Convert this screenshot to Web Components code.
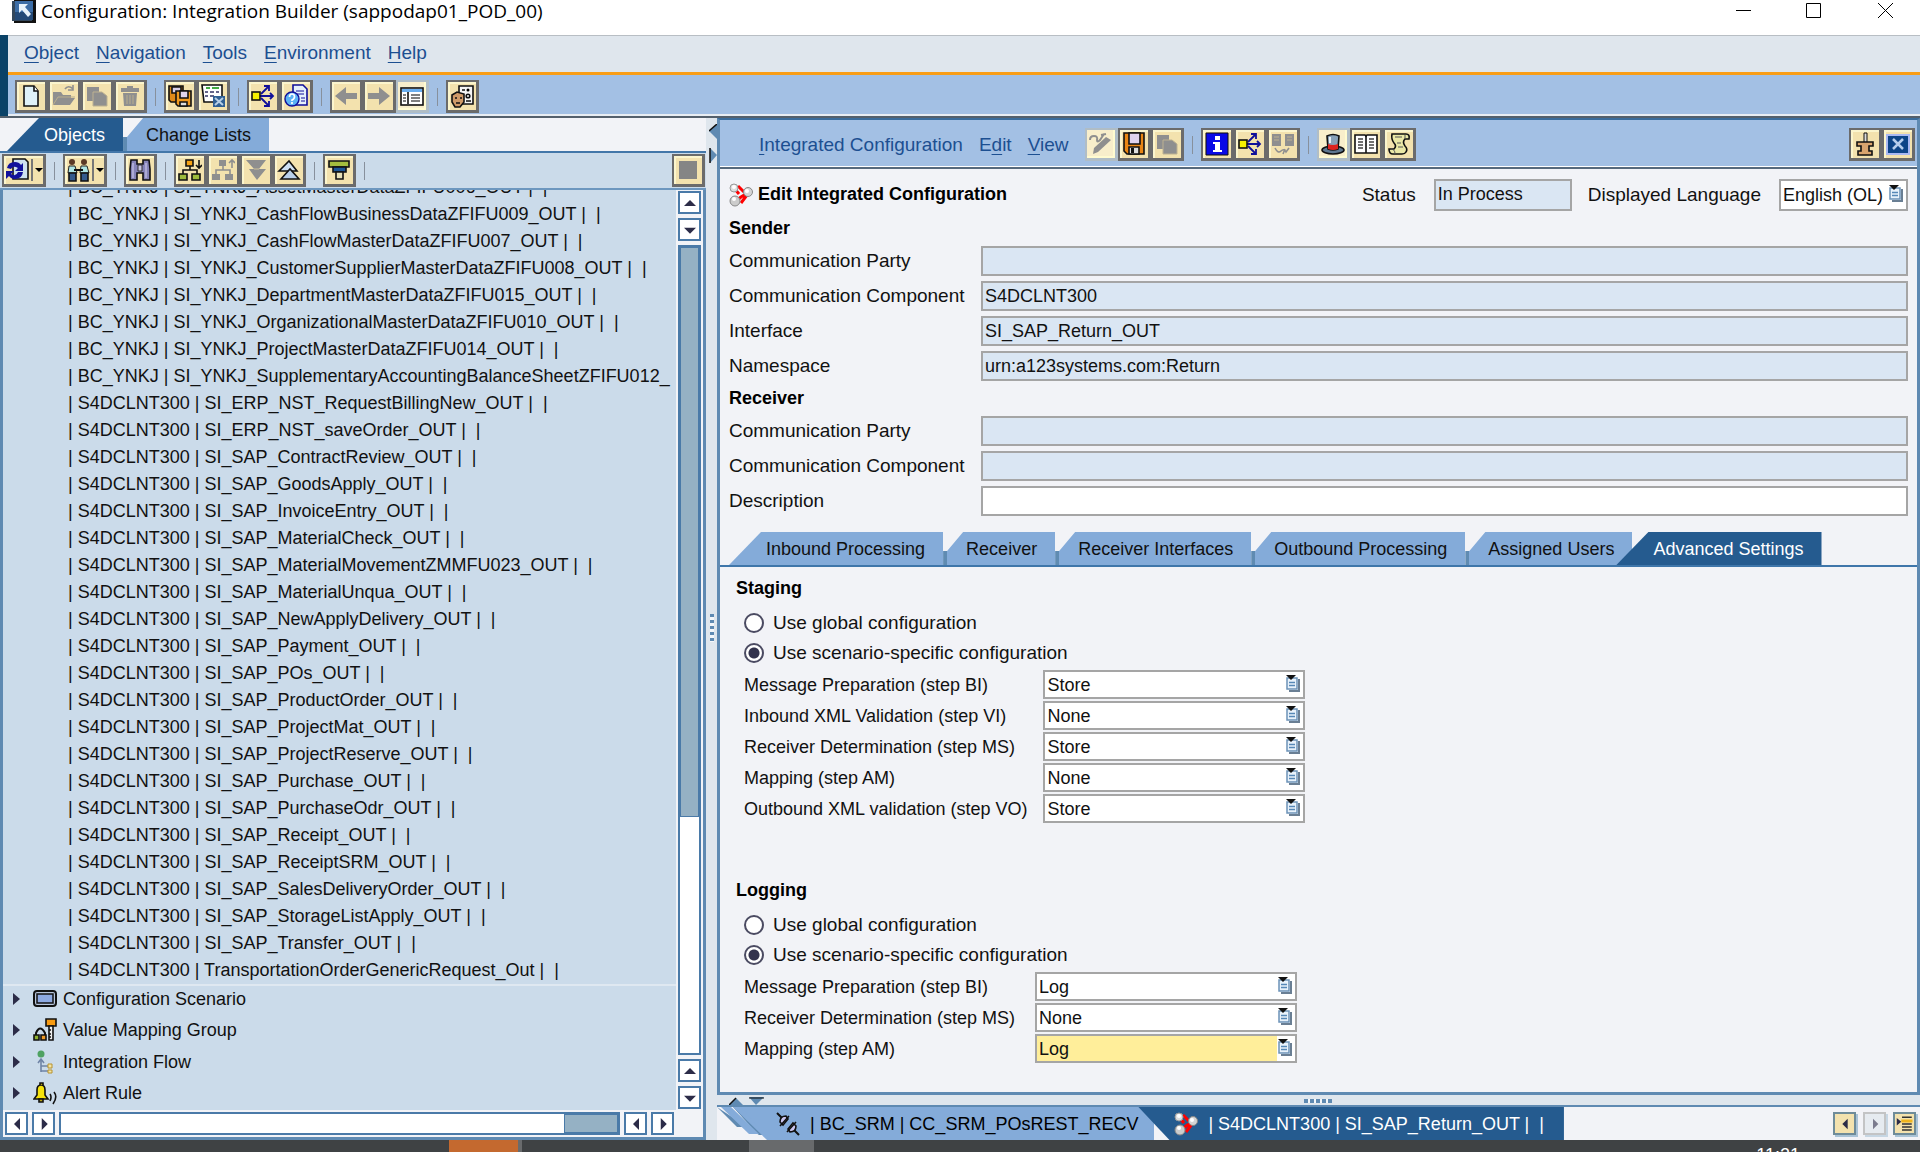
<!DOCTYPE html>
<html lang="en">
<head>
<meta charset="utf-8">
<title>Configuration: Integration Builder (sappodap01_POD_00)</title>
<style>
    :root {
        --bar: #a3c0e4;
        --pale: #dfe6ed;
        --tree: #cbdbea;
        --form: #f2f3f7;
        --edge: #5f8ab2;
        --tab: #84abd9;
        --tab-active: #255b8f;
        --text-lg: 19px;
    }

    body {
        margin: 0;
        font: 18px/24px "Liberation Sans", Arial, sans-serif;
        color: #111;
    }
</style>
</head>
<body>
<integration-builder></integration-builder>

<script>
    const K = 'stroke="#111" stroke-width="1.6"';
    const G = '#8f8f8f';

    const icons = {
        app: `<rect x="2" y="0" width="22" height="23" fill="#111"/><rect x="0" y="1" width="20" height="20" fill="#33475c"/><rect x="3" y="1" width="18" height="19" fill="#3c6da6"/><path d="M3 12h18v8H3z" fill="#244a78"/><path d="M7 4h9l-3 3 6 7-3 3-6-7-3 3z" fill="#e8f3fc"/>`,
        page: `<path d="M5 2h10l4 5v15H5z" fill="#dff1f8" ${K}/><path d="M15 2v5h4" fill="#fff" ${K}/>`,
        open: `<path d="M1 21V8h8l2 3h8v3h4l-5 7z" fill="${G}"/><path d="M1 21l5-8h17" fill="none" stroke="#b9ae8d"/><path d="M13 5c2-3 5-3 8 0m0-4v5h-5" fill="none" stroke="${G}" stroke-width="1.6"/>`,
        copy: `<path d="M2 3h12v14H2z" fill="${G}"/><path d="M8 8h9l5 4v10H8z" fill="${G}" stroke="#bdb191"/>`,
        trash: `<path d="M3 4h6V2h6v2h6v4H3zM5 9h14l-1 13H6z" fill="${G}"/><path d="M9 11v9M12 11v9M15 11v9" stroke="#b9ae8d"/>`,
        saveAll: `<path d="M1 2h14v16H3l-2-2z" fill="#e08a1a" ${K}/><path d="M4 3h9v6H4z" fill="#d9d0e8" ${K}/><path d="M8 7h15v15H10l-2-2z" fill="#f09a20" ${K}/><path d="M12 7h8v7h-8z" fill="#e0d4ee" ${K}/><path d="M12 18h7v4h-7z" fill="#ddd" ${K}/>`,
        worklist: `<path d="M1 1h20v17H3z" fill="#fff" ${K}/><path d="M5 4h4M11 4h7" stroke="#4a4" stroke-width="2"/><path d="M4 8h3M9 8h4M15 8h3M4 12h3M9 12h4" stroke="#336" stroke-width="1.6"/><rect x="12" y="12" width="12" height="11" fill="#2f5f94"/><path d="M14 14l8 7M22 14l-8 7" stroke="#b7cfe6" stroke-width="2"/>`,
        where: `<path d="M9 12h13M10 10l7-7M10 14l7 7M19 9l3 3-3 3M13 2h5v5M13 22h5v-5" fill="none" stroke="#10109a" stroke-width="1.8"/><rect x="1" y="8" width="8" height="8" fill="#f6f000" ${K}/>`,
        helpPage: `<path d="M9 1h10l4 4v16H9z" fill="#e5f0fb" stroke="#10109a" stroke-width="1.6"/><path d="M12 7h8M12 10h8M17 14h4M17 17h4" stroke="#10109a"/><circle cx="8" cy="15" r="7" fill="#5bb2f5" stroke="#10109a" stroke-width="1.4"/><path d="M5.5 13q0-3 2.5-3t2.5 2.5T8 16v1m0 1v2" fill="none" stroke="#fff" stroke-width="1.7"/>`,
        back: `<path d="M1 12L12 3v6h11v6H12v6z" fill="${G}"/>`,
        forward: `<path d="M23 12L12 3v6H1v6h11v6z" fill="${G}"/>`,
        layout: `<rect x="1" y="4" width="22" height="17" fill="#fff" ${K}/><path d="M2 5h20v3H2z" fill="#69aef0"/><path d="M8 8v12" stroke="#111" stroke-width="1.6"/><path d="M3 11h3M3 14h3M3 17h3M11 11h9M11 14h9M11 17h9" stroke="#555" stroke-width="1.3"/>`,
        face: `<path d="M9 2h14v18H9z" fill="#f5f5f5" ${K}/><circle cx="18" cy="6" r="1.5"/><path d="M12 6h3M16 17h5" stroke="#111" stroke-width="1.5"/><circle cx="18" cy="12" r="1.8" fill="none" ${K}/><path d="M2 11l5-3 7 2v8l-4 5H5l-3-5z" fill="#d09a68" ${K}/><path d="M5 14h2M10 14h2M6 19h4" stroke="#111" stroke-width="1.5"/>`,
        refresh: `<path d="M8 1h12l3 3v17H8z" fill="#cfe2f1" ${K}/><path d="M2 10q1-6 8-6 4 0 6 3l2-2v8h-8l3-3q-5-3-7 1zM18 14q-1 7-8 7-4 0-6-3l-3 3v-8h8l-3 3q5 3 7-2z" fill="#11119c"/>`,
        people: `<circle cx="6" cy="4" r="3" fill="#5b3826"/><circle cx="18" cy="4" r="3" fill="#5b3826"/><path d="M3 8h6l2 7H2zM15 8h6l2 7h-9z" fill="#aee4e4" stroke="#222"/><path d="M8 12h9" stroke="#111" stroke-width="2"/><path d="M3 15h7v8H3zM15 15h7v8h-7z" fill="#345a8d" ${K}/>`,
        find: `<path d="M3 2h6v4h6V2h6l1 9v11h-7v-7H9v7H2V11z" fill="#8583b8" ${K}/><path d="M10 7h4v6h-4z" fill="#c8c5e4" stroke="#333"/><path d="M5 5v15M18 5v15" stroke="#bbb9de" stroke-width="1.5"/>`,
        expand: `<path d="M12 8v4M5 16v-4h14v4" fill="none" ${K}/><path d="M8 2h7v6H8z" fill="#f5a214" ${K}/><path d="M1 16h8v6H1zM14 16h8v6h-8z" fill="#9dbc3c" ${K}/><path d="M21 2v8M18 7l3 3 3-3" fill="none" ${K}/>`,
        collapse: `<path d="M12 8v4M5 16v-4h14v4" fill="none" stroke="${G}" stroke-width="1.6"/><path d="M8 2h7v6H8zM1 16h8v6H1zM14 16h8v6h-8z" fill="${G}"/><path d="M21 10V2M18 5l3-3 3 3" fill="none" stroke="${G}" stroke-width="1.6"/>`,
        down: `<path d="M2 2h20l-7 9h7l-9 11-8-11h5z" fill="${G}"/><path d="M10 11h5" stroke="#c9bd98"/>`,
        up: `<path d="M2 13l10-10 8 10z" fill="#cfe0f2" ${K}/><path d="M4 21l9-10 9 10z" fill="#b9d0ea" ${K}/>`,
        filter: `<path d="M2 3h20v6H2z" fill="#a4bd3e" ${K}/><path d="M6 9h13v5H6z" fill="#1c5596" ${K}/><path d="M9 14h7v7H9z" fill="#e6e0b8" ${K}/>`,
        stop: `<path d="M3 3h18v18H3z" fill="#858585"/>`,
        edit: `<path d="M4 22l1-6L17 5l5 3L9 20z" fill="${G}"/><path d="M1 8q0-4 4-4t3 4q0 3 3 0l4-6M12 3l5-1" fill="none" stroke="${G}" stroke-width="2"/>`,
        save: `<path d="M2 1h20v21H5l-3-3z" fill="#e98514" ${K}/><path d="M7 1h11v11H7z" fill="#dfd2ee" ${K}/><path d="M7 15h10v7H7z" fill="#ddd" ${K}/><path d="M9 16h3v5H9z" fill="#111"/>`,
        info: `<path d="M1 1h22v22H1z" fill="#0909e6" stroke="#111"/><path d="M10 4h5v4h-5zM8 10h7v8h2v2H8v-2h2v-6H8z" fill="#fff"/>`,
        compare: `<path d="M1 2h9v12H1zM14 2h9v12h-9z" fill="${G}"/><path d="M3 5h5M3 8h5M16 5h5M16 8h5" stroke="#bdb191"/><path d="M4 16q3 6 6 3t5 1l3-4M12 22l2-5" fill="none" stroke="${G}" stroke-width="1.6"/>`,
        hat: `<ellipse cx="12" cy="18" rx="11" ry="4" fill="#5d7790" ${K}/><path d="M6 4q6-3 12 0l-1 13q-5 2-10 0z" fill="#87a0b8" ${K}/><path d="M7 12q5 2 10 0v5q-5 2-10 0z" fill="#dc2320"/><path d="M9 5v6" stroke="#e6eff6" stroke-width="2"/>`,
        book: `<path d="M1 3h10l1 1 1-1h10v18H1z" fill="#fff" ${K}/><path d="M12 4v17" ${K}/><path d="M4 7h5M4 10h5M4 13h5M4 16h5M15 7h5M15 10h5M15 13h5M15 16h5" stroke="#444" stroke-width="1.5"/>`,
        scroll: `<path d="M5 2h14q4 0 3 5h-4q-3 3 0 7 3 3 1 6-1 2-4 2H6q-4 0-4-5h5q3-3 0-6-3-4-2-9z" fill="#eae8a6" ${K}/><path d="M18 3v4M4 17q4 0 4 5M8 5h7M10 11h4M11 15h5" stroke="#555" fill="none"/>`,
        pin: `<path d="M11 1h3v10h-3z" fill="#ddd" stroke="#111"/><path d="M4 10h16v4h-4v5h3v4H5v-4h3v-5H4z" fill="#d9a46e" ${K}/>`,
        close: `<path d="M1 3h22v19H1z" fill="#0d4487" stroke="#a8b8f2" stroke-width="2"/><path d="M7 7l10 10M17 7L7 17" stroke="#b6cdec" stroke-width="2.5"/>`,
        nodes: `<path d="M5 5l5 6M7 18l5-4 8-5M9 3l6 6M12 20l6-8" stroke="#f00" stroke-width="3"/><circle cx="5" cy="5" r="4" fill="#ddd" stroke="#999"/><circle cx="19" cy="9" r="4.5" fill="#d5d5d5" stroke="#888"/><circle cx="6" cy="18" r="5" fill="#ccc" stroke="#888"/><circle cx="5" cy="4" r="2" fill="#fff"/><circle cx="18" cy="8" r="2" fill="#fff"/><circle cx="5" cy="16" r="2" fill="#fff"/>`,
        channel: `<path d="M1 1l6 6M17 17l6 6" stroke="#111" stroke-width="2"/><path d="M4 10q0-6 6-6l2 3-5 6z" fill="#c9c4ee" ${K}/><path d="M20 14q0 6-6 6l-2-3 5-6z" fill="#c9c4ee" ${K}/><path d="M4 14l9-10M11 20l9-10" ${K}/>`,
        scenario: `<rect x="1" y="4" width="22" height="15" rx="3" fill="#b8c6dc" stroke="#111" stroke-width="2"/><rect x="4" y="7" width="16" height="9" fill="#8eaae2" stroke="#111" stroke-width="1.5"/>`,
        key: `<path d="M3 18v-3q4-9 9 0v3" fill="none" stroke="#111" stroke-width="2"/><path d="M1 17h5v5H1z" fill="#8db02d" ${K}/><path d="M8 17h5v5H8z" fill="#ee9a28" ${K}/><path d="M13 1h10v7H13z" fill="#f79b13" ${K}/><path d="M16 8h4v14h-4z" fill="#eee" ${K}/><path d="M16 12h2M16 16h2M16 19h2" ${K}/>`,
        flow: `<circle cx="8" cy="4" r="3.5" fill="#4fa262"/><path d="M8 22V10M5 13l3-4 3 4M8 16h7M8 21h7" fill="none" stroke="#6f84a6" stroke-width="1.6"/><path d="M15 14h4v4h-4zM15 20h4v3h-4z" fill="#f2e4a6" stroke="#b8932e"/>`,
        bell: `<path d="M1 18l3-4V9q0-5 4-5t4 5v5l3 4z" fill="#f5e20d" ${K}/><path d="M7 4V2h3v2M6 18h4v3H6z" fill="#b5a010" ${K}/><path d="M17 13q2 3 0 7M21 11q4 5-1 12" fill="none" ${K}/>`,
        menuList: `<path d="M1 4l6 5-6 5z" fill="#2c2c48"/><path d="M8 3h13M8 12h13M8 16h13M8 20h13" stroke="#333" stroke-width="2"/><path d="M7 6h15v4H7z" fill="#f0b51d"/>`,
        navLeft: `<path d="M16 4v16L8 12z" fill="#2c2c48"/>`,
        navRight: `<path d="M9 4v16l8-8z" fill="#2c2c48"/>`,
        navUp: `<path d="M4 16h16l-8-8z" fill="#2c2c48"/>`,
        navDown: `<path d="M4 9h16l-8 8z" fill="#2c2c48"/>`
    };

    const svg = (name, size = 24) =>
        `<svg width="${size}" height="${size}" viewBox="0 0 24 24" aria-hidden="true">${icons[name]}</svg>`;

    class BaseElement extends HTMLElement {
        connectedCallback() {
            if (this.shadowRoot) return;
            this.attachShadow({ mode: 'open' });
            this.shadowRoot.innerHTML = this.render();
        }

        attr(name, fallback = '') {
            return this.getAttribute(name) ?? fallback;
        }
    }

    class ToolButton extends BaseElement {
        render() {
            const split = this.hasAttribute('split');
            return `
                <style>
                    :host { display: block; flex: none; }
                    button {
                        box-sizing: border-box;
                        width: 33px;
                        height: 33px;
                        padding: 0;
                        display: flex;
                        align-items: center;
                        justify-content: center;
                        background: #f3e2ae;
                        border: 2px solid #6b6b6b;
                        border-right-width: 3px;
                        border-bottom-width: 3px;
                        box-shadow: inset 2px 2px #fbf5cd;
                    }
                    button.split { width: 44px; gap: 2px; }
                    button.pressed {
                        background: #f8eecb;
                        border-color: #b0bdc6;
                        box-shadow: inset -2px -2px #fffbd0;
                    }
                    .drop { border-left: 2px solid #777; padding: 8px 0 8px 2px; }
                    .drop svg { display: block; }
                </style>
                <button type="button" class="${split ? 'split' : ''} ${this.hasAttribute('pressed') ? 'pressed' : ''}" aria-label="${this.attr('icon')}">
                    ${svg(this.attr('icon'))}
                    ${split ? '<span class="drop"><svg width="8" height="6"><path d="M0 1h8L4 5z"/></svg></span>' : ''}
                </button>
            `;
        }
    }

    class ToolSeparator extends BaseElement {
        render() {
            return `
                <style>
                    :host { display: block; flex: none; width: 1px; height: 18px; margin: 0 8px; background: #87909c; }
                </style>
            `;
        }
    }

    class MenuItem extends BaseElement {
        render() {
            return `
                <style>
                    :host { display: block; font-size: var(--text-lg); }
                    a { color: #1c4f91; text-decoration: none; white-space: nowrap; }
                    ::slotted(u) { text-underline-offset: 3px; }
                </style>
                <a href="#"><slot></slot></a>
            `;
        }
    }

    class TabItem extends BaseElement {
        render() {
            return `
                <style>
                    :host { display: block; flex: none; }
                    :host([active]) { position: relative; z-index: 1; }
                    button {
                        height: 33px;
                        padding: 0 18px 0 23px;
                        border: 0;
                        font: inherit;
                        color: #111;
                        white-space: nowrap;
                        background: linear-gradient(90deg, #5f8bb2 4px, var(--tab) 4px);
                        clip-path: polygon(0 19px, 4px 19px, 20px 0, 100% 0, 100% 100%, 0 100%);
                    }
                    :host([first]) button, :host([active]) button {
                        padding-left: 37px;
                        background: var(--tab);
                        clip-path: polygon(0 100%, 32px 0, 100% 0, 100% 100%);
                    }
                    :host([active]) button { background: var(--tab-active); color: #fff; }
                    :host([active]:not([first])) { margin-left: -16px; }
                </style>
                <button type="button" role="tab" aria-selected="${this.hasAttribute('active')}"><slot></slot></button>
            `;
        }
    }

    class ScrollBar extends BaseElement {
        render() {
            const vertical = this.hasAttribute('vertical');
            const pair = (vertical ? ['navUp', 'navDown'] : ['navLeft', 'navRight'])
                .map(n => `<button type="button" aria-label="${n}">${svg(n, 18)}</button>`).join('');
            return `
                <style>
                    :host {
                        display: flex;
                        flex-direction: ${vertical ? 'column' : 'row'};
                        gap: 4px;
                        padding: ${vertical ? '1px 2px' : '2px'};
                        background: var(--form);
                    }
                    button {
                        box-sizing: border-box;
                        flex: none;
                        width: 23px;
                        height: 23px;
                        padding: 0;
                        display: flex;
                        align-items: center;
                        justify-content: center;
                        border: 2px solid #4a7aa8;
                        background: #fff;
                    }
                    .track {
                        flex: 1;
                        display: flex;
                        flex-direction: inherit;
                        border: 2px solid #4a7aa8;
                        background: #fff;
                    }
                    .before { flex: ${this.attr('before')}; }
                    .thumb { flex: ${this.attr('thumb')}; background: #95b1c4; border: 1px solid #4a7aa8; }
                    .after { flex: ${this.attr('after')}; }
                </style>
                ${pair}
                <div class="track"><div class="before"></div><div class="thumb"></div><div class="after"></div></div>
                ${pair}
            `;
        }
    }

    class FormField extends BaseElement {
        render() {
            return `
                <style>
                    :host { display: contents; }
                    label { font-size: var(--text-lg); align-self: center; white-space: nowrap; }
                    input {
                        box-sizing: border-box;
                        width: 100%;
                        height: var(--input-height, 30px);
                        padding: 0 2px;
                        border: 2px solid #a5a5a5;
                        border-radius: 0;
                        background: #dae6f3;
                        font: inherit;
                        color: #111;
                    }
                    input.editable { background: #fff; }
                </style>
                <label for="field">${this.attr('label')}</label>
                <input id="field" value="${this.attr('value')}" ${this.hasAttribute('editable') ? 'class="editable"' : 'readonly'}>
            `;
        }
    }

    class SelectField extends BaseElement {
        render() {
            return `
                <style>
                    :host { display: contents; }
                    label { align-self: center; white-space: nowrap; font-size: var(--label-size, inherit); }
                    .box {
                        display: flex;
                        align-items: center;
                        box-sizing: border-box;
                        height: var(--select-height, 29px);
                        border: 2px solid #a5a5a5;
                        background: #fff;
                    }
                    select {
                        appearance: none;
                        flex: 1;
                        min-width: 0;
                        align-self: stretch;
                        padding: 0 2px;
                        border: 0;
                        border-radius: 0;
                        background: ${this.hasAttribute('focused') ? '#ffee9a' : '#fff'};
                        font: inherit;
                        color: #111;
                    }
                    svg { flex: none; margin: 0 3px 2px 1px; pointer-events: none; }
                </style>
                <label for="field">${this.attr('label')}</label>
                <div class="box">
                    <select id="field"><option>${this.attr('value')}</option></select>
                    <svg width="14" height="17" viewBox="0 0 14 17" aria-hidden="true">
                        <path d="M3 16h10V4" fill="none" stroke="#6a7f94" stroke-width="2"/>
                        <path d="M1 3h10v11H1z" fill="#e8f2fb" stroke="#6c93b8" stroke-width="1.5"/>
                        <path d="M3 7.500h6M3 10.500h6" stroke="#5688b7" stroke-width="1.5"/>
                        <path d="M0 0h10L5 5z" fill="#111"/>
                    </svg>
                </div>
            `;
        }
    }

    class RadioPair extends BaseElement {
        render() {
            return `
                <style>
                    :host { display: block; margin: 5px 0 2px; }
                    .option { display: flex; align-items: center; height: 30px; gap: 9px; font-size: var(--text-lg); }
                    input {
                        appearance: none;
                        box-sizing: border-box;
                        width: 20px;
                        height: 20px;
                        margin: 0;
                        border: 2px solid #4b4b62;
                        border-radius: 50%;
                        background: #fff;
                    }
                    input:checked { background: radial-gradient(circle, #33334d 5px, #fff 6px); }
                </style>
                <div class="option"><input type="radio" name="mode" id="global"><label for="global">Use global configuration</label></div>
                <div class="option"><input type="radio" name="mode" id="scenario" checked><label for="scenario">Use scenario-specific configuration</label></div>
            `;
        }
    }

    class TreeFolder extends BaseElement {
        render() {
            return `
                <style>
                    :host { display: flex; align-items: center; height: 26px; }
                    .toggle { margin: 0 13px 0 10px; }
                    .icon { margin-right: 6px; }
                    svg { display: block; }
                </style>
                <span class="toggle"><svg width="7" height="12"><path d="M0 0l7 6-7 6z" fill="#2c2c48"/></svg></span>
                <span class="icon">${svg(this.attr('icon'))}</span>
                <slot></slot>
            `;
        }
    }

    class ObjectTree extends BaseElement {
        render() {
            const party = 'BC_YNKJ';
            const system = 'S4DCLNT300';
            const end = ' |  |';
            const rows = [
                [party, 'SI_YNKJ_AssetMasterDataZFIFU006_OUT' + end],
                [party, 'SI_YNKJ_CashFlowBusinessDataZFIFU009_OUT' + end],
                [party, 'SI_YNKJ_CashFlowMasterDataZFIFU007_OUT' + end],
                [party, 'SI_YNKJ_CustomerSupplierMasterDataZFIFU008_OUT' + end],
                [party, 'SI_YNKJ_DepartmentMasterDataZFIFU015_OUT' + end],
                [party, 'SI_YNKJ_OrganizationalMasterDataZFIFU010_OUT' + end],
                [party, 'SI_YNKJ_ProjectMasterDataZFIFU014_OUT' + end],
                [party, 'SI_YNKJ_SupplementaryAccountingBalanceSheetZFIFU012_'],
                [system, 'SI_ERP_NST_RequestBillingNew_OUT' + end],
                [system, 'SI_ERP_NST_saveOrder_OUT' + end],
                [system, 'SI_SAP_ContractReview_OUT' + end],
                [system, 'SI_SAP_GoodsApply_OUT' + end],
                [system, 'SI_SAP_InvoiceEntry_OUT' + end],
                [system, 'SI_SAP_MaterialCheck_OUT' + end],
                [system, 'SI_SAP_MaterialMovementZMMFU023_OUT' + end],
                [system, 'SI_SAP_MaterialUnqua_OUT' + end],
                [system, 'SI_SAP_NewApplyDelivery_OUT' + end],
                [system, 'SI_SAP_Payment_OUT' + end],
                [system, 'SI_SAP_POs_OUT' + end],
                [system, 'SI_SAP_ProductOrder_OUT' + end],
                [system, 'SI_SAP_ProjectMat_OUT' + end],
                [system, 'SI_SAP_ProjectReserve_OUT' + end],
                [system, 'SI_SAP_Purchase_OUT' + end],
                [system, 'SI_SAP_PurchaseOdr_OUT' + end],
                [system, 'SI_SAP_Receipt_OUT' + end],
                [system, 'SI_SAP_ReceiptSRM_OUT' + end],
                [system, 'SI_SAP_SalesDeliveryOrder_OUT' + end],
                [system, 'SI_SAP_StorageListApply_OUT' + end],
                [system, 'SI_SAP_Transfer_OUT' + end],
                [system, 'TransportationOrderGenericRequest_Out' + end]
            ];
            return `
                <style>
                    :host {
                        display: flex;
                        flex-direction: column;
                        min-width: 0;
                        min-height: 0;
                        overflow: hidden;
                        background: var(--tree);
                    }
                    ul {
                        flex: 1;
                        min-height: 0;
                        display: flex;
                        flex-direction: column;
                        justify-content: flex-end;
                        margin: 0;
                        padding: 0 0 0 65px;
                        overflow: hidden;
                        list-style: none;
                    }
                    li { flex: none; line-height: 27px; white-space: pre; }
                    .folders {
                        flex: none;
                        display: flex;
                        flex-direction: column;
                        justify-content: space-between;
                        height: 120px;
                        padding-bottom: 4px;
                        border-top: 2px solid #dfe8f1;
                    }
                </style>
                <ul>${rows.map(([c, i]) => `<li>| ${c} | ${i}</li>`).join('')}</ul>
                <div class="folders">
                    <tree-folder icon="scenario">Configuration Scenario</tree-folder>
                    <tree-folder icon="key">Value Mapping Group</tree-folder>
                    <tree-folder icon="flow">Integration Flow</tree-folder>
                    <tree-folder icon="bell">Alert Rule</tree-folder>
                </div>
            `;
        }
    }

    class ObjectsPane extends BaseElement {
        render() {
            return `
                <style>
                    :host { display: flex; flex-direction: column; min-width: 0; min-height: 0; background: var(--form); }
                    .tabs { display: flex; padding-left: 7px; }
                    .tools {
                        display: flex;
                        align-items: center;
                        height: 35px;
                        padding: 0 1px 0 2px;
                        border-top: 2px solid #4377a9;
                        border-bottom: 2px solid #6d97bf;
                        background: var(--tree);
                    }
                    .fill { flex: 1; }
                    .body {
                        flex: 1;
                        min-height: 0;
                        display: grid;
                        grid-template: minmax(0, 1fr) 27px / minmax(0, 1fr) 27px;
                        border: solid var(--edge);
                        border-width: 0 3px 3px;
                    }
                </style>
                <div class="tabs" role="tablist">
                    <tab-item first active>Objects</tab-item>
                    <tab-item>Change Lists</tab-item>
                </div>
                <div class="tools">
                    <tool-button icon="refresh" split></tool-button>
                    <tool-separator></tool-separator>
                    <tool-button icon="people" split></tool-button>
                    <tool-separator></tool-separator>
                    <tool-button icon="find"></tool-button>
                    <tool-separator></tool-separator>
                    <tool-button icon="expand"></tool-button>
                    <tool-button icon="collapse"></tool-button>
                    <tool-button icon="down"></tool-button>
                    <tool-button icon="up"></tool-button>
                    <tool-separator></tool-separator>
                    <tool-button icon="filter"></tool-button>
                    <tool-separator></tool-separator>
                    <span class="fill"></span>
                    <tool-button icon="stop"></tool-button>
                </div>
                <div class="body">
                    <object-tree></object-tree>
                    <scroll-bar vertical before="0" thumb="571" after="237"></scroll-bar>
                    <scroll-bar before="508" thumb="53" after="0"></scroll-bar>
                </div>
            `;
        }
    }

    class PaneSplitter extends BaseElement {
        render() {
            return `
                <style>
                    :host { display: block; position: relative; background: var(--pale); }
                    .arrows { position: absolute; top: 6px; left: 3px; }
                    .dots {
                        position: absolute;
                        top: 496px;
                        left: 4px;
                        width: 4px;
                        height: 28px;
                        background: repeating-linear-gradient(#5f8ab2 0 3px, #f4f7fa 3px 6px);
                    }
                    :host([horizontal]) { height: 10px; }
                    :host([horizontal]) .arrows { top: 2px; left: 12px; }
                    :host([horizontal]) .dots {
                        top: 4px;
                        left: calc(50% - 15px);
                        width: 28px;
                        height: 4px;
                        background: repeating-linear-gradient(90deg, #5f8ab2 0 4px, #f4f7fa 4px 6px);
                    }
                </style>
                ${this.hasAttribute('horizontal')
                    ? '<svg class="arrows" width="36" height="8"><path d="M0 8l7-7 7 7z" fill="#5f8ab2"/><path d="M0 8l7-7" fill="none" stroke="#111" stroke-width="1.5"/><path d="M20 0h15l-8 8z" fill="#5f8ab2"/><path d="M20 1h15" stroke="#111"/></svg>'
                    : '<svg class="arrows" width="8" height="40"><path d="M8 0L0 7l8 8z" fill="#5f8ab2"/><path d="M8 0L0 7" stroke="#111" stroke-width="1.5"/><path d="M1 24l7 7-7 8z" fill="#5f8ab2"/><path d="M1 24v15" stroke="#111" stroke-width="1.5"/></svg>'}
                <div class="dots"></div>
            `;
        }
    }

    class OpenObjects extends BaseElement {
        render() {
            return `
                <style>
                    :host { display: flex; align-items: center; height: 33px; overflow: hidden; }
                    .stack { flex: none; margin-right: -34px; }
                    .tab {
                        display: flex;
                        align-items: center;
                        height: 33px;
                        padding: 0;
                        border: 0;
                        font: inherit;
                        white-space: pre;
                    }
                    .idle {
                        gap: 10px;
                        padding: 0 16px 0 35px;
                        background: var(--tab);
                        clip-path: polygon(0 0, 100% 0, 100% 100%, 28px 100%);
                    }
                    .current {
                        gap: 10px;
                        margin-left: -16px;
                        padding: 0 20px 0 36px;
                        background: var(--tab-active);
                        color: #fff;
                        clip-path: polygon(0 0, 100% 0, 100% 100%, 31px 100%);
                    }
                    .fill { flex: 1; }
                    .nav {
                        box-sizing: border-box;
                        width: 23px;
                        height: 23px;
                        margin-right: 7px;
                        padding: 0;
                        display: flex;
                        align-items: center;
                        justify-content: center;
                        border: 2px solid #6f8c99;
                        background: #f3e2ae;
                        box-shadow: 2px 2px #a9c3d6;
                    }
                    .nav:last-child { margin-right: 4px; }
                    .nav:disabled { background: var(--pale); border-color: #a5a5a5; opacity: 0.6; }
                </style>
                <svg class="stack" width="58" height="33"><path d="M0 0h30l22 28H42zM0 0l20 20h14L16 0z" fill="#5f8ab2"/><path d="M4 0l28 27h10L14 0z" fill="#84abd9"/><path d="M16 0h9l33 33h-8z" fill="#84abd9"/></svg>
                <button type="button" class="tab idle">${svg('channel')}<span>| BC_SRM | CC_SRM_POsREST_RECV</span></button>
                <button type="button" class="tab current">${svg('nodes')}<span>| S4DCLNT300 | SI_SAP_Return_OUT |  |</span></button>
                <span class="fill"></span>
                <button type="button" class="nav" aria-label="Previous">${svg('navLeft', 16)}</button>
                <button type="button" class="nav" aria-label="Next" disabled>${svg('navRight', 16)}</button>
                <button type="button" class="nav" aria-label="List">${svg('menuList', 18)}</button>
            `;
        }
    }

    class EditorPane extends BaseElement {
        render() {
            return `
                <style>
                    :host {
                        display: flex;
                        flex-direction: column;
                        min-width: 0;
                        min-height: 0;
                        background: var(--form);
                    }
                    .frame {
                        flex: 1;
                        min-height: 0;
                        display: flex;
                        flex-direction: column;
                        border: 3px solid var(--edge);
                        border-top: 2px solid #3a6c9c;
                    }
                    header {
                        flex: none;
                        display: flex;
                        align-items: center;
                        height: 43px;
                        gap: 16px;
                        padding: 3px 2px 0 39px;
                        background: var(--bar);
                        border-bottom: 1px solid #fff;
                        box-shadow: 0 2px #56697c;
                    }
                    .tools { display: flex; align-items: center; }
                    .fill { flex: 1; }
                    .form { padding: 11px 9px 16px; }
                    .title { display: flex; align-items: center; height: 33px; gap: 16px; }
                    h1, h2 { margin: 0; font-size: 18px; line-height: 35px; color: #000; }
                    h1 { display: flex; align-items: center; gap: 5px; flex: 1; }
                    .status { display: grid; grid-template-columns: auto 138px; gap: 18px; --input-height: 32px; }
                    .language { display: grid; grid-template-columns: auto 129px; gap: 18px; --label-size: 19px; --select-height: 32px; }
                    .fields { display: grid; grid-template-columns: 243px minmax(0, 1fr); column-gap: 9px; row-gap: 5px; }
                    .tabs { flex: none; display: flex; padding-left: 9px; border-bottom: 2px solid #3f76aa; }
                    .settings { flex: 1; min-height: 0; padding: 6px 16px; }
                    .settings h2 { line-height: 30px; }
                    .group { margin-left: 8px; }
                    .steps { display: grid; grid-template-columns: minmax(275px, auto) 262px; gap: 2px 16px; width: max-content; margin-bottom: 52px; }
                    .rule { height: 2px; background: var(--edge); }
                </style>
                <div class="frame">
                    <header>
                        <menu-item><u>I</u>ntegrated Configuration</menu-item>
                        <menu-item>E<u>d</u>it</menu-item>
                        <menu-item><u>V</u>iew</menu-item>
                        <div class="tools">
                            <tool-button icon="edit" pressed></tool-button>
                            <tool-button icon="save"></tool-button>
                            <tool-button icon="copy"></tool-button>
                            <tool-separator></tool-separator>
                            <tool-button icon="info"></tool-button>
                            <tool-button icon="where"></tool-button>
                            <tool-button icon="compare"></tool-button>
                            <tool-separator></tool-separator>
                            <tool-button icon="hat" pressed></tool-button>
                            <tool-button icon="book"></tool-button>
                            <tool-button icon="scroll"></tool-button>
                        </div>
                        <span class="fill"></span>
                        <div class="tools">
                            <tool-button icon="pin"></tool-button>
                            <tool-button icon="close"></tool-button>
                        </div>
                    </header>
                    <div class="form">
                        <div class="title">
                            <h1>${svg('nodes')}Edit Integrated Configuration</h1>
                            <div class="status"><form-field label="Status" value="In Process"></form-field></div>
                            <div class="language"><select-field label="Displayed Language" value="English (OL)"></select-field></div>
                        </div>
                        <h2>Sender</h2>
                        <div class="fields">
                            <form-field label="Communication Party"></form-field>
                            <form-field label="Communication Component" value="S4DCLNT300"></form-field>
                            <form-field label="Interface" value="SI_SAP_Return_OUT"></form-field>
                            <form-field label="Namespace" value="urn:a123systems.com:Return"></form-field>
                        </div>
                        <h2>Receiver</h2>
                        <div class="fields">
                            <form-field label="Communication Party"></form-field>
                            <form-field label="Communication Component"></form-field>
                            <form-field label="Description" editable></form-field>
                        </div>
                    </div>
                    <div class="tabs" role="tablist">
                        <tab-item first>Inbound Processing</tab-item>
                        <tab-item>Receiver</tab-item>
                        <tab-item>Receiver Interfaces</tab-item>
                        <tab-item>Outbound Processing</tab-item>
                        <tab-item>Assigned Users</tab-item>
                        <tab-item active>Advanced Settings</tab-item>
                    </div>
                    <div class="settings">
                        <h2>Staging</h2>
                        <div class="group">
                            <radio-pair></radio-pair>
                            <div class="steps">
                                <select-field label="Message Preparation (step BI)" value="Store"></select-field>
                                <select-field label="Inbound XML Validation (step VI)" value="None"></select-field>
                                <select-field label="Receiver Determination (step MS)" value="Store"></select-field>
                                <select-field label="Mapping (step AM)" value="None"></select-field>
                                <select-field label="Outbound XML validation (step VO)" value="Store"></select-field>
                            </div>
                        </div>
                        <h2>Logging</h2>
                        <div class="group">
                            <radio-pair></radio-pair>
                            <div class="steps">
                                <select-field label="Message Preparation (step BI)" value="Log"></select-field>
                                <select-field label="Receiver Determination (step MS)" value="None"></select-field>
                                <select-field label="Mapping (step AM)" value="Log" focused></select-field>
                            </div>
                        </div>
                    </div>
                </div>
                <pane-splitter horizontal></pane-splitter>
                <div class="rule"></div>
                <open-objects></open-objects>
            `;
        }
    }

    class IntegrationBuilder extends BaseElement {
        render() {
            return `
                <style>
                    :host { display: flex; flex-direction: column; height: 100vh; overflow: hidden; background: #fff; }
                    .caption {
                        flex: none;
                        display: flex;
                        align-items: flex-start;
                        height: 35px;
                        padding-left: 12px;
                        gap: 5px;
                        font-family: "Open Sans", sans-serif;
                        font-size: var(--text-lg);
                        line-height: 22px;
                        color: #000;
                    }
                    .caption .fill { flex: 1; }
                    .caption button {
                        width: 65px;
                        height: 23px;
                        padding: 0;
                        border: 0;
                        background: none;
                    }
                    .caption button:last-child { width: 69px; }
                    .bars { flex: none; border-left: 8px solid #0a4267; }
                    .menu {
                        display: flex;
                        align-items: center;
                        height: 34px;
                        gap: 17px;
                        padding: 0 0 2px 16px;
                        background: var(--pale);
                        border-top: 1px solid #b8bec4;
                        border-bottom: 3px solid #f99d16;
                    }
                    .tools {
                        display: flex;
                        align-items: center;
                        height: 35px;
                        padding: 4px 0 0 7px;
                        background: var(--bar);
                        border-bottom: 2px solid #e8edf3;
                    }
                    .panes {
                        flex: 1;
                        min-height: 0;
                        display: grid;
                        grid-template: minmax(0, 1fr) / minmax(0, 706fr) 11px minmax(0, 1203fr);
                        border-top: 2px solid #54606c;
                    }
                    .taskbar {
                        flex: none;
                        display: flex;
                        justify-content: flex-end;
                        height: 12px;
                        padding-right: 120px;
                        overflow: hidden;
                        background: linear-gradient(90deg, transparent 23.4%, #c4692f 23.4% 27%, #696b6d 27% 27.2%, transparent 27.2% 39%, #686a6c 39% 42.4%, transparent 42.4%), #3f4244;
                        color: #fff;
                        line-height: 30px;
                    }
                </style>
                <div class="caption">
                    ${svg('app')}
                    <span>Configuration: Integration Builder (sappodap01_POD_00)</span>
                    <span class="fill"></span>
                    <button type="button" aria-label="Minimize"><svg width="15" height="15"><path d="M0 7.500h15" stroke="#000"/></svg></button>
                    <button type="button" aria-label="Maximize"><svg width="15" height="15"><path d="M.5.5h14v14H.5z" fill="none" stroke="#000"/></svg></button>
                    <button type="button" aria-label="Close"><svg width="15" height="15"><path d="M0 0l15 15M15 0L0 15" stroke="#000"/></svg></button>
                </div>
                <div class="bars">
                    <nav class="menu">
                        <menu-item><u>O</u>bject</menu-item>
                        <menu-item><u>N</u>avigation</menu-item>
                        <menu-item><u>T</u>ools</menu-item>
                        <menu-item><u>E</u>nvironment</menu-item>
                        <menu-item><u>H</u>elp</menu-item>
                    </nav>
                    <div class="tools">
                        <tool-button icon="page"></tool-button>
                        <tool-button icon="open"></tool-button>
                        <tool-button icon="copy"></tool-button>
                        <tool-button icon="trash"></tool-button>
                        <tool-separator></tool-separator>
                        <tool-button icon="saveAll"></tool-button>
                        <tool-button icon="worklist"></tool-button>
                        <tool-separator></tool-separator>
                        <tool-button icon="where"></tool-button>
                        <tool-button icon="helpPage"></tool-button>
                        <tool-separator></tool-separator>
                        <tool-button icon="back"></tool-button>
                        <tool-button icon="forward"></tool-button>
                        <tool-button icon="layout" pressed></tool-button>
                        <tool-separator></tool-separator>
                        <tool-button icon="face"></tool-button>
                    </div>
                </div>
                <div class="panes">
                    <objects-pane></objects-pane>
                    <pane-splitter></pane-splitter>
                    <editor-pane></editor-pane>
                </div>
                <div class="taskbar">11:21</div>
            `;
        }
    }

    customElements.define('tool-button', ToolButton);
    customElements.define('tool-separator', ToolSeparator);
    customElements.define('menu-item', MenuItem);
    customElements.define('tab-item', TabItem);
    customElements.define('scroll-bar', ScrollBar);
    customElements.define('form-field', FormField);
    customElements.define('select-field', SelectField);
    customElements.define('radio-pair', RadioPair);
    customElements.define('tree-folder', TreeFolder);
    customElements.define('object-tree', ObjectTree);
    customElements.define('objects-pane', ObjectsPane);
    customElements.define('pane-splitter', PaneSplitter);
    customElements.define('open-objects', OpenObjects);
    customElements.define('editor-pane', EditorPane);
    customElements.define('integration-builder', IntegrationBuilder);
</script>
</body>
</html>
